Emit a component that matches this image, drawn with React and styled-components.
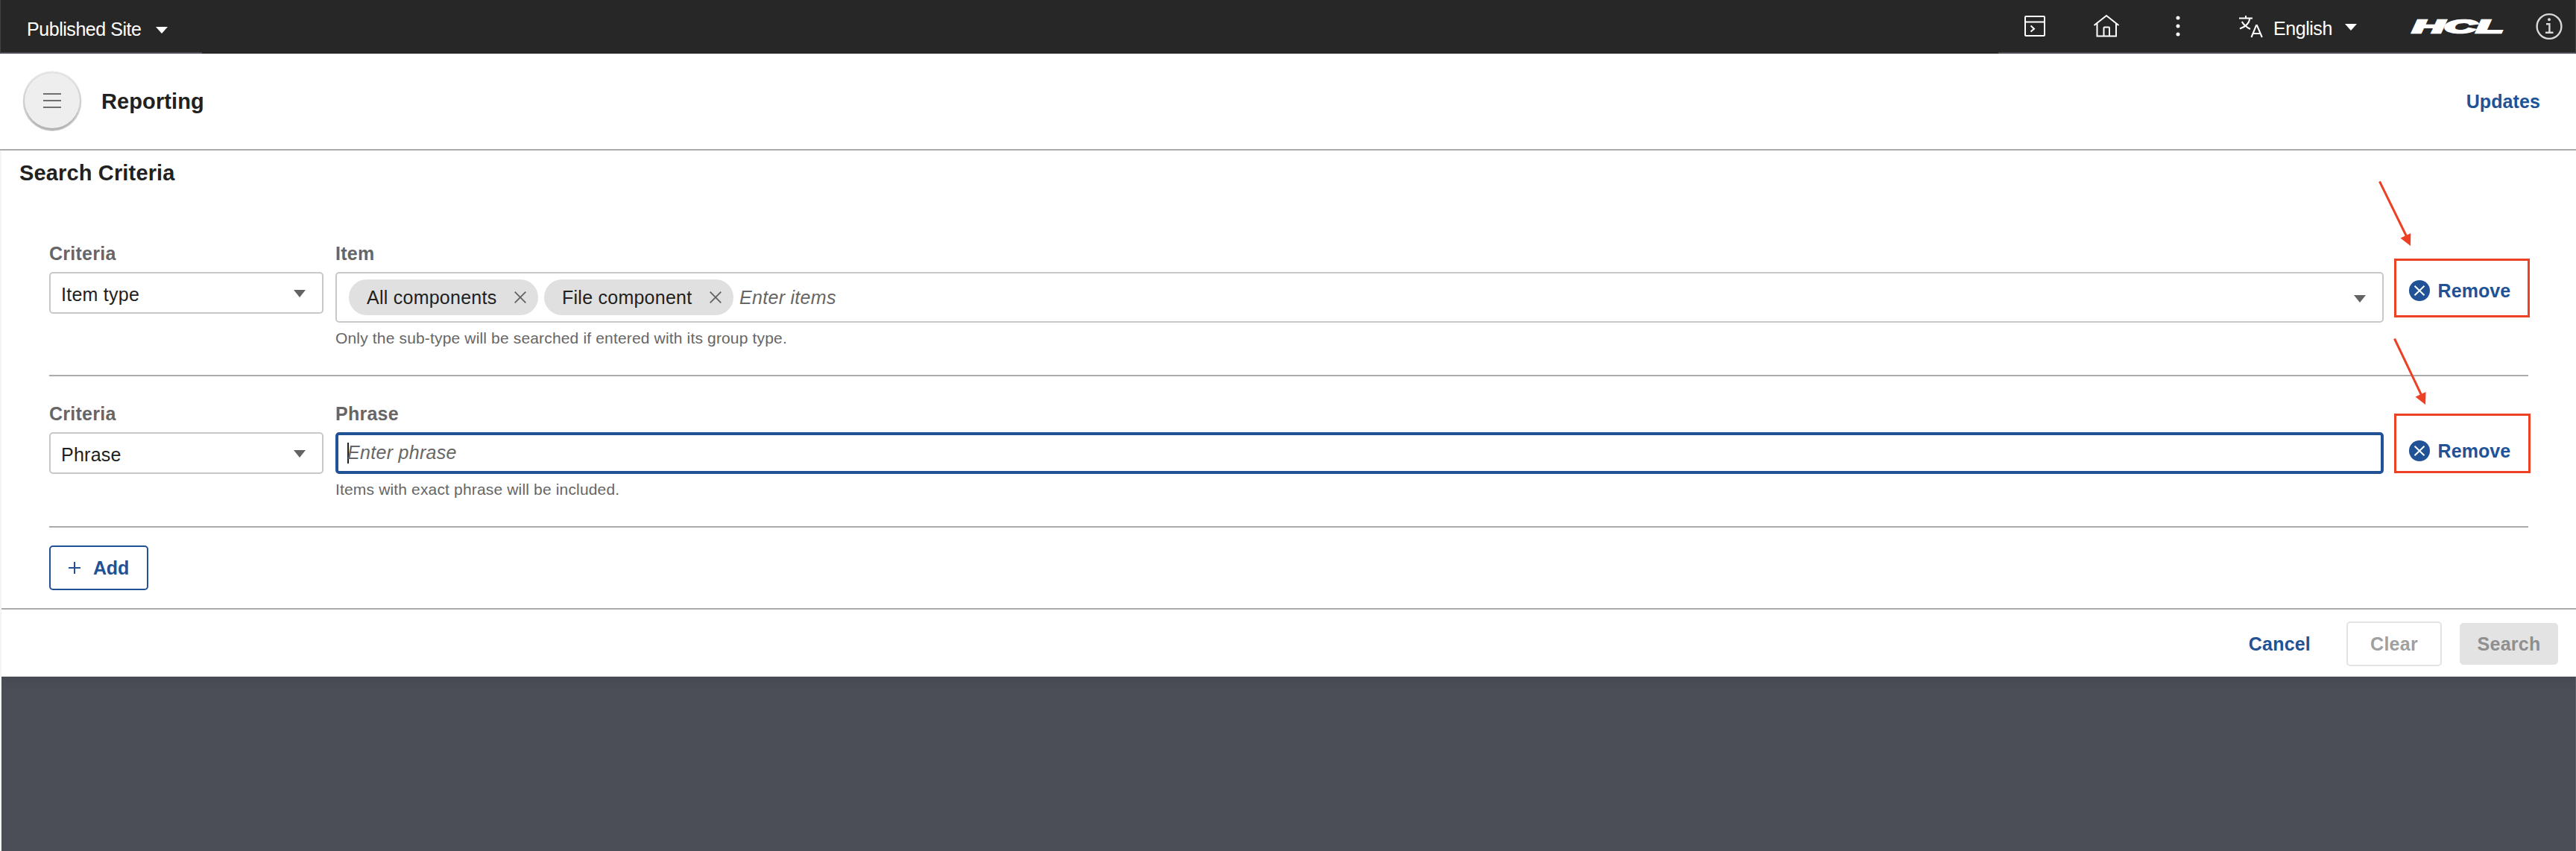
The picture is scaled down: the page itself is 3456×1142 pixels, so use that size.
import React from "react";
import styled, { createGlobalStyle, css } from "styled-components";

const blue = "#205295";
const grey = "#666666";
const rule = "#ababab";
const red = "#ec4124";

const GlobalStyle = createGlobalStyle`
  * { box-sizing: border-box; }
  body {
    margin: 0;
    background: #fff;
    font-family: "Liberation Sans", Arial, Helvetica, sans-serif;
    font-size: 25px;
    color: #212121;
    overflow: hidden;
  }
  svg { display: block; flex: none; }
`;

const Page = styled.div`
  position: relative;
  display: flex;
  flex-direction: column;
  width: 3456px;
  height: 1142px;
`;

/* ---------- top bar ---------- */
const TopBar = styled.header`
  display: flex;
  justify-content: space-between;
  height: 72px;
  flex: none;
  background: #272727;
  color: #fff;
  border-left: 1px solid #424242;
  border-right: 1px solid #424242;
  letter-spacing: -0.45px;
`;

const SiteMenu = styled.div`
  display: flex;
  align-items: center;
  width: 270px;
  padding: 8px 0 0 35px;
  line-height: 30px;
  border-bottom: 2px solid #4e4b54;
`;

const SiteName = styled.span`
  width: 173px;
  white-space: nowrap;
`;

const Tools = styled.div`
  display: flex;
  align-items: center;
  width: 774px;
  border-bottom: 2px solid #4e4b54;
`;

const ToolIcon = styled.span`
  display: flex;
  justify-content: center;
  width: 36px;
  margin-left: ${(p) => p.$left}px;
`;

const Language = styled.div`
  display: flex;
  align-items: center;
  margin-left: 63px;
  padding-top: 5px;
  line-height: 30px;
`;

const LanguageName = styled.span`
  width: 96px;
  margin-left: 13px;
`;

const Caret = styled.span`
  flex: none;
  width: 0;
  height: 0;
  border-left: 8px solid transparent;
  border-right: 8px solid transparent;
  border-top: ${(p) => p.$h || 10}px solid ${(p) => p.$color || "#636363"};
  margin-top: ${(p) => p.$drop || 0}px;
`;

/* ---------- page header ---------- */
const PageHeader = styled.div`
  display: flex;
  align-items: center;
  height: 130px;
  flex: none;
  padding: 0 48px 0 33px;
  border-bottom: 2px solid ${rule};
`;

const MenuButton = styled.button`
  display: flex;
  align-items: center;
  justify-content: center;
  width: 74px;
  height: 74px;
  margin: -2px 29px 0 0;
  padding: 0;
  border: 0;
  border-radius: 50%;
  background: #eeeeee;
  box-shadow: 0 4px 1px -1px #b4b4b4, 0 2px 0 2px #cfcfcf, 0 0 0 2.5px #e4e4e4;
`;

const Heading = styled.h1`
  margin: 0;
  font-size: 29px;
  font-weight: 700;
  letter-spacing: 0.1px;
`;

const TextLink = styled.a`
  color: ${blue};
  font-weight: 700;
  letter-spacing: 0.1px;
`;

const Spacer = styled.div`
  flex: 1;
`;

/* ---------- search panel ---------- */
const Body = styled.div`
  flex: 1;
  display: flex;
  flex-direction: column;
  border-left: 2px solid #f4f4f4;
`;

const PanelTitle = styled.h2`
  margin: 0;
  padding-left: 24px;
  height: 60px;
  font-size: 29px;
  line-height: 60px;
  letter-spacing: 0.15px;
`;

const Criteria = styled.section`
  display: flex;
  flex-direction: column;
  align-items: stretch;
  padding: 63px 64px 24px 64px;
  border-bottom: 2px solid ${rule};
`;

const CriteriaRow = styled.div`
  display: flex;
  padding-bottom: 37px;
  border-bottom: 2px solid ${rule};
  margin-bottom: ${(p) => (p.$last ? 24 : 35)}px;
`;

const Field = styled.div`
  display: flex;
  flex-direction: column;
  ${(p) =>
    p.$wide
      ? css`
          flex: 1;
        `
      : css`
          width: 368px;
          margin-right: 16px;
        `}
`;

const Label = styled.label`
  margin-bottom: 10px;
  color: ${grey};
  font-weight: 700;
  line-height: 30px;
  letter-spacing: 0.25px;
`;

const Box = styled.div`
  display: flex;
  align-items: center;
  height: ${(p) => p.$height || 56}px;
  border: 2px solid #c8c8c8;
  border-radius: 5px;
  line-height: 30px;
  letter-spacing: 0.25px;
`;

const Select = styled(Box)`
  justify-content: space-between;
  padding: 3px 22px 0 14px;
`;

const TagBox = styled(Box)`
  gap: 8px;
  padding: 0 22px 0 16px;
`;

const FocusedBox = styled(Box)`
  padding: 0 0 2px 12px;
  border: 4px solid ${blue};
`;

const TextCursor = styled.span`
  width: 2px;
  height: 28px;
  margin: 2px -2px 0 0;
  background: #212121;
`;

const Placeholder = styled.span`
  color: ${grey};
  font-style: italic;
  letter-spacing: 0.3px;
`;

const Chip = styled.span`
  display: flex;
  align-items: center;
  justify-content: space-between;
  width: 254px;
  height: 48px;
  padding: 0 16px 0 24px;
  border-radius: 24px;
  background: #e0e0e0;
`;

const Helper = styled.p`
  margin: 9px 0 0;
  color: ${grey};
  font-size: 21px;
  line-height: 24px;
  letter-spacing: 0.16px;
`;

const RemoveButton = styled.button`
  display: flex;
  align-items: center;
  gap: 10.5px;
  width: 194px;
  height: 28px;
  margin-top: 51px;
  padding: 0 0 0 34px;
  border: 0;
  background: none;
  color: ${blue};
  font: inherit;
  font-weight: 700;
  letter-spacing: 0.1px;
`;

const Button = styled.button`
  display: flex;
  align-items: center;
  justify-content: center;
  width: ${(p) => p.$width}px;
  height: ${(p) => p.$height || 60}px;
  padding: 0;
  border: 2px solid ${(p) => p.$border};
  border-radius: 5px;
  background: ${(p) => p.$fill || "#fff"};
  color: ${(p) => p.$color};
  font: inherit;
  font-weight: 700;
  letter-spacing: 0.25px;
`;

const AddButton = styled(Button)`
  justify-content: flex-start;
  gap: 17px;
  padding-left: 24px;
  letter-spacing: -0.2px;
`;

const Footer = styled.footer`
  display: flex;
  align-items: center;
  justify-content: flex-end;
  gap: 24px;
  height: 90px;
  flex: none;
  padding: 2px 24px 0 0;
`;

const CancelLink = styled(TextLink)`
  margin-right: 24px;
  letter-spacing: 0.2px;
`;

const Backdrop = styled.div`
  flex: 1;
  background: linear-gradient(#474a52, #4b4e57 22px);
  border-right: 1px solid #5d6068;
`;

/* ---------- annotations ---------- */
const Annotations = styled.svg`
  position: absolute;
  left: 3180px;
  top: 230px;
  pointer-events: none;
`;

const WindowIcon = () => (
  <svg width="30" height="30" viewBox="0 0 30 30" fill="none" stroke="#fff" strokeWidth="2">
    <rect x="2" y="2" width="26" height="26" rx="1" />
    <path d="M2 9.5H28M9.5 14.5L14 18.7L9.5 22.5" />
  </svg>
);

const HomeIcon = () => (
  <svg width="36" height="32" viewBox="0 0 36 32" fill="none" stroke="#fff" strokeWidth="2">
    <path d="M1.5 15L18 2L34.5 15M5.5 12.5V29.5H31V12.5M14.5 29.5V18.5Q14.5 17.5 15.5 17.5H21Q22 17.5 22 18.5V29.5" />
  </svg>
);

const DotsIcon = () => (
  <svg width="8" height="30" viewBox="0 0 8 30" fill="#fff">
    <circle cx="4" cy="4" r="2.5" />
    <circle cx="4" cy="15" r="2.5" />
    <circle cx="4" cy="26" r="2.5" />
  </svg>
);

const TranslateSvg = styled.svg`
  margin-top: -3px;
`;

const TranslateIcon = () => (
  <TranslateSvg width="34" height="32" viewBox="0 0 34 32" fill="none" stroke="#fff" strokeWidth="2">
    <path d="M1 4.5H19M10 1V4.5M4.8 9Q8 15 16 19M15.5 4.5Q14 14.5 2 18.5" />
    <path d="M17.5 30L24 14H25L31.8 30M20 25H29.5" />
  </TranslateSvg>
);

const BrandLogo = () => (
  <svg width="140" height="40" viewBox="0 0 140 40">
    <text
      x="6.5"
      y="29"
      fill="#fff"
      stroke="#fff"
      strokeWidth="2.4"
      fontFamily="Liberation Sans, Arial, sans-serif"
      fontSize="24"
      fontWeight="700"
      fontStyle="italic"
      letterSpacing="0"
      textLength="122"
      lengthAdjust="spacingAndGlyphs"
    >
      HCL
    </text>
  </svg>
);

const InfoIcon = () => (
  <svg width="36" height="36" viewBox="0 0 36 36" fill="none" stroke="#d8d8d8" strokeWidth="2.4">
    <circle cx="18" cy="18.5" r="16.4" />
    <path d="M14 15.2H18.4V26.7M13 26.7H23.5" />
    <circle cx="18" cy="9.2" r="2" fill="#d8d8d8" stroke="none" />
  </svg>
);

const MenuIcon = () => (
  <svg width="24" height="22" viewBox="0 0 24 22" stroke="#6f6f6f" strokeWidth="2">
    <path d="M0 2H24M0 11H24M0 20H24" />
  </svg>
);

const CloseIcon = () => (
  <svg width="16" height="16" viewBox="0 0 16 16" stroke="#5f5f5f" strokeWidth="1.7">
    <path d="M0.7 0.7L15.3 15.3M15.3 0.7L0.7 15.3" />
  </svg>
);

const RemoveIcon = () => (
  <svg width="28" height="28" viewBox="0 0 28 28">
    <circle cx="14" cy="14" r="14" fill={blue} />
    <path d="M7.5 7.7L20.5 20.3M20.5 7.7L7.5 20.3" stroke="#fff" strokeWidth="2" />
  </svg>
);

const PlusIcon = () => (
  <svg width="16" height="16" viewBox="0 0 16 16" stroke={blue} strokeWidth="2">
    <path d="M8 0V16M0 8H16" />
  </svg>
);

const Remove = () => (
  <RemoveButton>
    <RemoveIcon />
    Remove
  </RemoveButton>
);

const CriteriaSelect = ({ value }) => (
  <Field>
    <Label>Criteria</Label>
    <Select>
      {value}
      <Caret $drop={-2} />
    </Select>
  </Field>
);

export default function App() {
  return (
    <Page>
      <GlobalStyle />
      <TopBar>
        <SiteMenu>
          <SiteName>Published Site</SiteName>
          <Caret $h={9} $color="#fff" $drop={2} />
        </SiteMenu>
        <Tools>
          <ToolIcon $left={31}><WindowIcon /></ToolIcon>
          <ToolIcon $left={60}><HomeIcon /></ToolIcon>
          <ToolIcon $left={60}><DotsIcon /></ToolIcon>
          <Language>
            <TranslateIcon />
            <LanguageName>English</LanguageName>
            <Caret $h={9} $color="#fff" $drop={-3} />
          </Language>
          <Spacer />
          <BrandLogo />
          <ToolIcon $left={32}><InfoIcon /></ToolIcon>
          <ToolIcon $left={-19} />
        </Tools>
      </TopBar>

      <PageHeader>
        <MenuButton><MenuIcon /></MenuButton>
        <Heading>Reporting</Heading>
        <Spacer />
        <TextLink>Updates</TextLink>
      </PageHeader>

      <Body>
        <PanelTitle>Search Criteria</PanelTitle>
        <Criteria>
          <CriteriaRow>
            <CriteriaSelect value="Item type" />
            <Field $wide>
              <Label>Item</Label>
              <TagBox $height={68}>
                <Chip>All components<CloseIcon /></Chip>
                <Chip>File component<CloseIcon /></Chip>
                <Placeholder>Enter items</Placeholder>
                <Spacer />
                <Caret $drop={4} />
              </TagBox>
              <Helper>Only the sub-type will be searched if entered with its group type.</Helper>
            </Field>
            <Remove />
          </CriteriaRow>
          <CriteriaRow $last>
            <CriteriaSelect value="Phrase" />
            <Field $wide>
              <Label>Phrase</Label>
              <FocusedBox>
                <TextCursor />
                <Placeholder>Enter phrase</Placeholder>
              </FocusedBox>
              <Helper>Items with exact phrase will be included.</Helper>
            </Field>
            <Remove />
          </CriteriaRow>
          <AddButton $width={133} $border={blue} $color={blue}>
            <PlusIcon />
            Add
          </AddButton>
        </Criteria>
        <Footer>
          <CancelLink>Cancel</CancelLink>
          <Button $width={128} $border="#e3e3e3" $color="#a0a0a0">Clear</Button>
          <Button $width={132} $height={56} $border="#e3e3e3" $fill="#e3e3e3" $color="#8f8f8f">Search</Button>
        </Footer>
        <Backdrop />
      </Body>

      <Annotations width="230" height="420" viewBox="3180 230 230 420" fill="none" stroke={red} strokeWidth="3">
        <rect x="3213.5" y="348.5" width="179" height="76" />
        <rect x="3213.5" y="556.5" width="180" height="77" />
        <path d="M3192.5 243.5L3229 318M3212.5 454.5L3249 531" />
        <path d="M3234 330L3220.5 319.5L3234.3 313ZM3254 543L3240.5 532.5L3254.5 526Z" fill={red} stroke="none" />
      </Annotations>
    </Page>
  );
}
